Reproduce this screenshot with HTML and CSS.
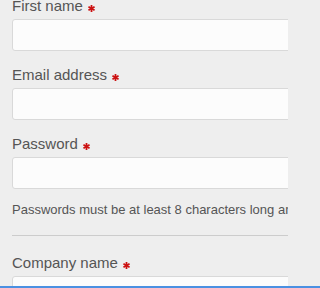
FILE: index.html
```html
<!DOCTYPE html>
<html>
<head>
<meta charset="utf-8">
<link rel="stylesheet" href="styles.css">
</head>
<body>
<div class="viewport">
<form class="form">
  <div class="field">
    <label class="label">First name <svg class="req" viewBox="0 0 8 8" width="7" height="7"><g stroke="#cc1111" stroke-width="2"><line x1="4" y1="0" x2="4" y2="8"/><line x1="0.5" y1="2" x2="7.5" y2="6"/><line x1="0.5" y1="6" x2="7.5" y2="2"/></g></svg></label>
    <input class="input" type="text">
  </div>
  <div class="field">
    <label class="label">Email address <svg class="req" viewBox="0 0 8 8" width="7" height="7"><g stroke="#cc1111" stroke-width="2"><line x1="4" y1="0" x2="4" y2="8"/><line x1="0.5" y1="2" x2="7.5" y2="6"/><line x1="0.5" y1="6" x2="7.5" y2="2"/></g></svg></label>
    <input class="input" type="text">
  </div>
  <div class="field field-last">
    <label class="label">Password <svg class="req" viewBox="0 0 8 8" width="7" height="7"><g stroke="#cc1111" stroke-width="2"><line x1="4" y1="0" x2="4" y2="8"/><line x1="0.5" y1="2" x2="7.5" y2="6"/><line x1="0.5" y1="6" x2="7.5" y2="2"/></g></svg></label>
    <input class="input" type="password">
  </div>
  <p class="help">Passwords must be at least 8 characters long and contain a number.</p>
  <hr class="divider">
  <div class="field">
    <label class="label">Company name <svg class="req" viewBox="0 0 8 8" width="7" height="7"><g stroke="#cc1111" stroke-width="2"><line x1="4" y1="0" x2="4" y2="8"/><line x1="0.5" y1="2" x2="7.5" y2="6"/><line x1="0.5" y1="6" x2="7.5" y2="2"/></g></svg></label>
    <input class="input" type="text">
  </div>
</form>
</div>
<div class="bottom-bar"></div>
</body>
</html>
```
FILE: styles.css
```css
html, body {
  margin: 0;
  padding: 0;
  overflow: hidden;
  background: #eeeeee;
}
body {
  font-family: "Liberation Sans", Arial, sans-serif;
  color: #555555;
  width: 288px;
  height: 288px;
}
.viewport {
  width: 288px;
  height: 288px;
  overflow: hidden;
}
.form {
  width: 420px;
  margin: -4px 0 0 12px;
}
.field {
  display: flex;
  flex-direction: column;
  margin-bottom: 14px;
}
.field-last {
  margin-bottom: 0;
}
.label {
  display: block;
  font-size: 15px;
  line-height: 20px;
  height: 20px;
  margin-bottom: 3px;
  white-space: nowrap;
}
.req {
  vertical-align: -1px;
  margin-left: 1px;
}
.input {
  box-sizing: border-box;
  width: 100%;
  height: 32px;
  margin: 0;
  background: #fcfcfc;
  border: 1px solid #d9d9d9;
  border-radius: 3px;
  outline: none;
  font-family: inherit;
  font-size: 14px;
}
.help {
  margin: 12px 0 0;
  font-size: 13px;
  line-height: 18px;
  white-space: nowrap;
  color: #555555;
}
.divider {
  margin: 16px 0 17px;
  border: 0;
  border-top: 1px solid #cccccc;
  height: 0;
}
.bottom-bar {
  position: fixed;
  left: 0;
  right: 0;
  bottom: 0;
  height: 2px;
  background: #4a90e2;
}
```
